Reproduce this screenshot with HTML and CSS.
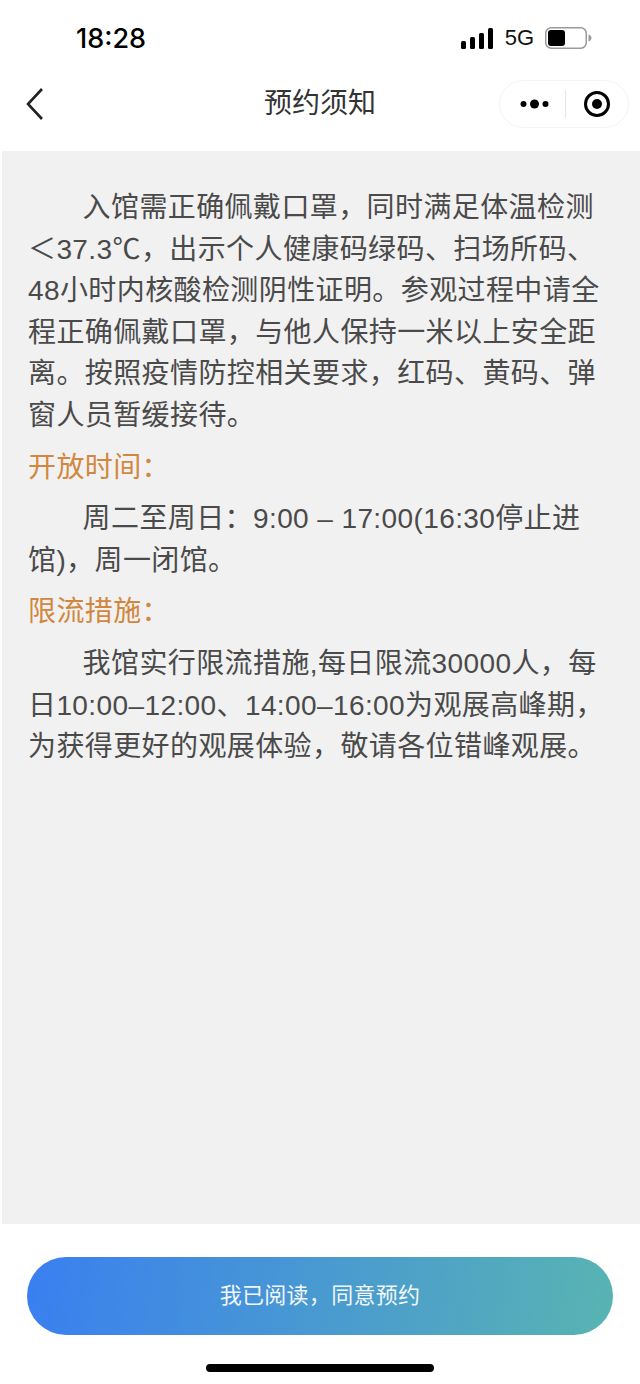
FILE: index.html
```html
<!DOCTYPE html>
<html lang="zh-CN">
<head>
    <meta charset="UTF-8">
    <meta name="viewport" content="width=device-width, initial-scale=1.0">
    <title>预约须知</title>
    <link rel="stylesheet" href="styles.css">
</head>
<body>

<div class="status-bar">
    <span class="time">18:28</span>
    <div class="status-icons">
        <svg class="signal" width="33" height="21" viewBox="0 0 33 21">
            <rect x="0" y="13" width="5" height="8" rx="1.5"/>
            <rect x="9" y="9" width="5" height="12" rx="1.5"/>
            <rect x="18" y="5" width="5" height="16" rx="1.5"/>
            <rect x="27" y="0" width="5" height="21" rx="1.5"/>
        </svg>
        <span class="network">5G</span>
        <svg class="battery" width="47" height="22" viewBox="0 0 47 22">
            <rect x="0.75" y="0.75" width="40.5" height="20.5" rx="5.5" fill="#fff" stroke="#9a9a9a" stroke-width="1.5"/>
            <rect x="3" y="3" width="17" height="16" rx="3" fill="#000"/>
            <path d="M43.5 7.5c2 .6 3 2 3 3.500s-1 2.900-3 3.500z" fill="#9a9a9a"/>
        </svg>
    </div>
</div>

<div class="nav-bar">
    <svg class="back" width="20" height="34" viewBox="0 0 20 34">
        <path d="M17 2 L3 17 L17 32" fill="none" stroke="#222" stroke-width="2.600"/>
    </svg>
    <h1 class="nav-title">预约须知</h1>
    <div class="capsule">
        <svg width="30" height="12" viewBox="0 0 30 12">
            <circle cx="3.500" cy="6" r="3"/>
            <circle cx="14.500" cy="6" r="4.500"/>
            <circle cx="25.500" cy="6" r="3"/>
        </svg>
        <span class="capsule-line"></span>
        <svg width="28" height="28" viewBox="0 0 28 28">
            <circle cx="14" cy="14" r="11.500" fill="none" stroke="#000" stroke-width="3"/>
            <circle cx="14" cy="14" r="5"/>
        </svg>
    </div>
</div>

<div class="content">
    <p>入馆需正确佩戴口罩，同时满足体温检测＜37.3℃，出示个人健康码绿码、扫场所码、48小时内核酸检测阴性证明。参观过程中请全程正确佩戴口罩，与他人保持一米以上安全距离。按照疫情防控相关要求，红码、黄码、弹窗人员暂缓接待。</p>
    <h3>开放时间：</h3>
    <p>周二至周日：9:00 – 17:00(16:30停止进馆)，周一闭馆。</p>
    <h3>限流措施：</h3>
    <p>我馆实行限流措施,每日限流30000人，每日10:00–12:00、14:00–16:00为观展高峰期，为获得更好的观展体验，敬请各位错峰观展。</p>
</div>

<div class="footer">
    <button type="button" class="btn">我已阅读，同意预约</button>
    <div class="home-bar"></div>
</div>

</body>
</html>
```
FILE: styles.css
```css
* {
    margin: 0;
    padding: 0;
    box-sizing: border-box;
}

body {
    width: 640px;
    height: 1384px;
    display: flex;
    flex-direction: column;
    overflow: hidden;
    background-color: #fff;
    color: #333;
    font-family: "Noto Sans CJK SC", "Liberation Sans", sans-serif;
}

/* Status bar */
.status-bar {
    height: 72px;
    flex: none;
    display: flex;
    justify-content: space-between;
    align-items: center;
    padding: 4px 48px 0 76px;
}

.time {
    font-family: Inter, "Liberation Sans", sans-serif;
    font-size: 27px;
    font-weight: 500;
    color: #000;
}

.status-icons {
    display: flex;
    align-items: center;
    gap: 11px;
}

.network {
    font-family: "Liberation Sans", sans-serif;
    font-size: 22px;
    color: #111;
}

/* Nav bar */
.nav-bar {
    height: 79px;
    flex: none;
    display: flex;
    align-items: center;
    justify-content: space-between;
    position: relative;
    padding: 0 11px 16px 25px;
}

.nav-title {
    position: absolute;
    left: 0;
    right: 0;
    top: 9px;
    text-align: center;
    font-size: 28px;
    font-weight: 400;
    line-height: 40px;
    color: #333;
}

.capsule {
    width: 130px;
    height: 48px;
    display: flex;
    align-items: center;
    justify-content: space-between;
    padding: 0 17px 0 20px;
    border: 1px solid #f4f4f4;
    border-radius: 24px;
    background-color: #fff;
}

.capsule-line {
    width: 1px;
    height: 28px;
    background-color: #e6e6e6;
    margin-left: -2px;
}

/* Content */
.content {
    height: 1073px;
    flex: none;
    margin-left: 2px;
    padding: 36px 34px 0 26px;
    background-color: #f1f1f1;
    font-family: "Liberation Sans", "Noto Sans CJK SC", sans-serif;
    font-size: 28px;
    letter-spacing: 0.4px;
    line-height: 41.600px;
    color: #4a4a4a;
}

.content p {
    text-indent: 1.950em;
}

.content h3 {
    font-weight: 400;
    font-size: 28px;
    color: #d2873f;
    margin: 10px 0;
}

/* Footer */
.footer {
    flex: 1;
    display: flex;
    flex-direction: column;
    align-items: center;
    padding-top: 33px;
}

.btn {
    width: 586px;
    height: 78px;
    padding-bottom: 6px;
    border: none;
    border-radius: 39px;
    background: linear-gradient(95deg, #3a7ff0, #58b4b2);
    color: #f2f6fa;
    font-family: inherit;
    font-size: 22px;
    letter-spacing: 0.3px;
}

.home-bar {
    width: 228px;
    height: 8px;
    margin-top: 29px;
    border-radius: 4px;
    background-color: #000;
}
```
